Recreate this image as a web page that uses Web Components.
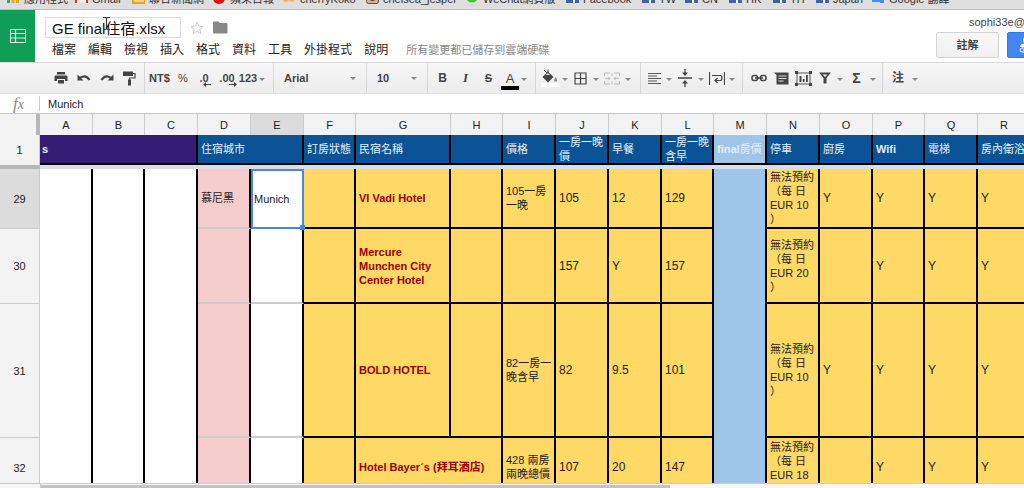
<!DOCTYPE html>
<html lang="zh-Hant">
<head>
<meta charset="utf-8">
<title>GE final住宿.xlsx</title>
<style>
html,body{margin:0;height:100%}
body{font-family:"Liberation Sans","Noto Sans CJK TC",sans-serif;font-size:12px;color:#222;background:#fff;overflow:hidden}
</style>
</head>
<body>
<sheet-app></sheet-app>

<template id="t-app">
<style>
:host{display:flex;flex-direction:column;height:100vh}
sheet-grid{flex:1;min-height:0}
</style>
<bookmark-bar>
<bookmark-item kind="apps" style="width:55px">應用程式</bookmark-item>
<bookmark-item kind="mail" style="width:44px">Gmail</bookmark-item>
<bookmark-item kind="news" style="width:68px">聯合新聞網</bookmark-item>
<bookmark-item kind="apple" style="width:57px">蘋果日報</bookmark-item>
<bookmark-item kind="cherry" style="width:70px">cherryKoko</bookmark-item>
<bookmark-item kind="cam" style="width:87px">chelsea_jesper</bookmark-item>
<bookmark-item kind="chat" style="width:87px">WeChat網頁版</bookmark-item>
<bookmark-item kind="fb" style="width:63px">Facebook</bookmark-item>
<bookmark-item kind="fb" style="width:30px">TW</bookmark-item>
<bookmark-item kind="fb" style="width:31px">CN</bookmark-item>
<bookmark-item kind="fb" style="width:31px">HK</bookmark-item>
<bookmark-item kind="fb" style="width:30px">TH</bookmark-item>
<bookmark-item kind="fb" style="width:43px">Japan</bookmark-item>
<bookmark-item kind="tr" style="width:90px">Google 翻譯</bookmark-item>
</bookmark-bar>
<doc-header></doc-header>
<tool-bar></tool-bar>
<formula-bar></formula-bar>
<sheet-grid></sheet-grid>
<scroll-strip></scroll-strip>
</template>

<template id="t-bookmarks">
<style>
:host{display:flex;flex:none;align-items:flex-end;gap:13px;height:9px;padding-left:7px;overflow:hidden;background:#dedede;border-bottom:1px solid #bdbdbd}
</style>
<slot></slot>
</template>

<template id="t-header">
<style>
:host{display:flex;flex:none;height:52px;overflow:hidden;background:#fff}
.logo{flex:none;width:35px;background:#0f9d58;display:flex;align-items:center;justify-content:center}
.main{flex:1;min-width:0;padding:7px 0 0 10px;display:flex;flex-direction:column;gap:3px}
.title{display:flex;align-items:center;height:21px}
.name{position:relative}
input{box-sizing:border-box;display:block;width:136px;height:21px;border:1px solid #dcdcdc;padding:0 6px;font:15px/19px "Liberation Sans","Noto Sans CJK TC",sans-serif;color:#111;background:#fff;outline:0}
.beam{position:absolute;left:57px;top:-1px}
.icon{border:0;background:none;padding:0;display:flex;margin-left:9px}
nav{display:flex;align-items:center;height:18px;white-space:nowrap}
nav button{border:0;background:none;padding:0 6px;font:12px/18px "Liberation Sans","Noto Sans CJK TC",sans-serif;color:#222}
nav button:first-child{padding-left:7px}
.saved{margin-left:12px;font-size:11px;line-height:18px;color:#888}
.side{flex:none;width:88px;display:flex;flex-direction:column;overflow:hidden;padding-top:4px}
.mail{font-size:11px;line-height:16px;margin-left:33px;white-space:nowrap;color:#444}
.acts{display:flex;gap:8px;margin-top:2px}
.acts button{box-sizing:border-box;flex:none;height:26px;border:1px solid #d4d4d4;border-radius:2px;padding:0}
.note{width:63px;background:linear-gradient(#f8f8f8,#f0f0f0);font:bold 11px/22px "Liberation Sans","Noto Sans CJK TC",sans-serif;color:#444}
.acts .share{width:80px;background:#4285f4;border-color:#3079ed;text-align:left;padding-left:11px}
.share svg{display:block}
</style>
<div class="logo"><svg width="18" height="16" viewBox="0 0 18 16" fill="none" stroke="#d5f0e1" stroke-width="1"><rect x="1.5" y="1.5" width="15" height="13"/><path d="M1.5 5.500H16.500M1.500 10H16.500M6.500 1.500V14.500" stroke-width="1.200"/></svg></div>
<div class="main">
<div class="title">
<div class="name"><input aria-label="文件名稱" value="GE final住宿.xlsx"><svg class="beam" width="9" height="15" viewBox="0 0 9 15" fill="none" stroke="#333" stroke-width="1.100"><path d="M1 1.500H3.500L4.500 2.500L5.500 1.500H8M4.500 2.500V12.500M1 13.500H3.500L4.500 12.500L5.500 13.500H8"/></svg></div>
<button class="icon" aria-label="加星號"><svg width="14" height="14" viewBox="0 0 14 14"><path d="M7 1L8.800 5.200 13 5.500 9.800 8.300 10.800 12.700 7 10.300 3.200 12.700 4.200 8.300 1 5.500 5.200 5.200Z" fill="#fff" stroke="#ccc"/></svg></button>
<button class="icon" aria-label="資料夾"><svg width="15" height="13" viewBox="0 0 15 13"><path d="M0 1.500Q0 .5 1 .5H5.500L7 2H13.500Q14.500 2 14.500 3V11.500Q14.500 12.500 13.500 12.500H1Q0 12.500 0 11.500Z" fill="#888"/></svg></button>
</div>
<nav><button>檔案</button><button>編輯</button><button>檢視</button><button>插入</button><button>格式</button><button>資料</button><button>工具</button><button>外掛程式</button><button>說明</button><span class="saved">所有變更都已儲存到雲端硬碟</span></nav>
</div>
<div class="side"><div class="mail">sophi33e@g</div>
<div class="acts"><button class="note">註解</button><button class="share" aria-label="共用"><svg width="18" height="18" viewBox="0 0 18 18" fill="#fff"><circle cx="7" cy="4" r="3"/><path d="M1 10Q2 7.500 7 7.500T13 10V11H1Z"/><rect x="1" y="12" width="6" height="4" rx="2" fill="none" stroke="#fff"/><path d="M4 14H10" stroke="#fff"/></svg></button></div></div>
</template>

<template id="t-toolbar">
<style>
:host{display:flex;flex:none;height:30px;padding-left:49px;overflow:hidden;border-top:1px solid #d9d9d9;border-bottom:1px solid #e2e2e2;background:linear-gradient(#f7f7f7,#ececec);color:#444}
svg{display:block}
b{font-size:11px}
.dec{position:relative}
.dec svg{position:absolute;right:-2px;top:11px}
.a{display:flex;flex-direction:column;align-items:center;font-size:13px;line-height:14px;padding-top:5px}
.a::after{content:"";width:18px;height:4px;background:#000}
</style>
<tool-group style="padding-right:3px">
<tool-button w="23" label="列印"><svg width="14" height="12" viewBox="0 0 14 12" fill="#444"><path d="M3 0H11V2.500H3ZM1.500 3.500H12.500Q13.500 3.500 13.500 5V9H11V7H3V9H.5V5Q.5 3.500 1.500 3.500ZM4 8H10V11.500H4Z"/></svg></tool-button>
<tool-button w="23" label="復原"><svg width="14" height="10" viewBox="0 0 14 10"><path d="M.5 1.500V7.500H6.500L4.300 5.500Q8.500 3 11.500 7.500L13.500 6.500Q9 -.5 2.800 3.800Z" fill="#444"/></svg></tool-button>
<tool-button w="23" label="重做"><svg width="14" height="10" viewBox="0 0 14 10"><path d="M13.500 1.500V7.500H7.500L9.700 5.500Q5.500 3 2.500 7.500L.5 6.500Q5 -.5 11.200 3.800Z" fill="#444"/></svg></tool-button>
<tool-button w="23" label="複製格式"><svg width="13" height="15" viewBox="0 0 13 15"><path d="M0 .5H10V5H0Z" fill="#444"/><path d="M10 2.500H12V7H6.500V9" fill="none" stroke="#444" stroke-width="1.200"/><rect x="5" y="8.500" width="3" height="6" fill="#444"/></svg></tool-button>
</tool-group>
<tool-group style="padding-right:7px">
<tool-button w="29"><b>NT$</b></tool-button>
<tool-button w="18"><b style="font-weight:normal">%</b></tool-button>
<tool-button w="24" label="減少小數位數"><div class="dec"><b>.0</b><svg width="8" height="5" viewBox="0 0 8 5"><path d="M0 2.500L3 0V2H8V3H3V5Z" fill="#444"/></svg></div></tool-button>
<tool-button w="22" label="增加小數位數"><div class="dec"><b>.00</b><svg width="8" height="5" viewBox="0 0 8 5"><path d="M8 2.500L5 0V2H0V3H5V5Z" fill="#444"/></svg></div></tool-button>
<tool-button w="20"><b>123</b></tool-button><tool-caret></tool-caret>
</tool-group>
<tool-group><tool-select w="92" value="Arial" label="字型"></tool-select></tool-group>
<tool-group><tool-select w="60" value="10" label="字型大小"></tool-select></tool-group>
<tool-group style="padding:0 7px 0 3px">
<tool-button w="23"><b style="font-size:12px">B</b></tool-button>
<tool-button w="23"><b style="font:italic bold 13px 'Liberation Serif',serif">I</b></tool-button>
<tool-button w="23"><b style="text-decoration:line-through">S</b></tool-button>
<tool-button w="20"><span class="a">A</span></tool-button><tool-caret></tool-caret>
</tool-group>
<tool-group style="padding:0 8px 0 3px">
<tool-button w="22" label="填滿色彩"><svg width="18" height="18" viewBox="0 0 18 18"><path d="M0 14H18V18H0Z" fill="#fff"/><path d="M7 2.500L12.500 8 7 13.500 1.500 8Z" fill="#444"/><path d="M3 1L8 6M7 .5V6" stroke="#444" fill="none"/><path d="M5 5.500L7 4L9 6H4.500Z" fill="#ddd"/><path d="M14.500 8Q17 11 15.800 12.500H13.500Q12.500 11 14.500 8Z" fill="#888"/></svg></tool-button><tool-caret></tool-caret>
<tool-button w="23" label="框線"><svg width="13" height="13" viewBox="0 0 13 13"><path d="M1 1H12V12H1ZM1 6.500H12M6.500 1V12" fill="none" stroke="#444" stroke-width="1.200"/></svg></tool-button><tool-caret></tool-caret>
<tool-button w="24" label="合併儲存格"><svg width="16" height="13" viewBox="0 0 16 13" fill="none" stroke="#bbb"><path d="M6 1H.5V4M.5 9V12H6M10 1H15.500V4M15.500 9V12H10M8 1V4M8 9V12M1 6.500H6M4 4.500L6 6.500 4 8.500M15 6.500H10M12 4.500L10 6.500 12 8.500"/></svg></tool-button><tool-caret></tool-caret>
</tool-group>
<tool-group style="padding:0 6px 0 2px">
<tool-button w="22" label="水平對齊"><svg width="13" height="11" viewBox="0 0 13 11"><path d="M0 .5H13M0 3H9M0 5.500H13M0 8H9M0 10.500H13" stroke="#555"/></svg></tool-button><tool-caret></tool-caret>
<tool-button w="24" label="垂直對齊"><svg width="14" height="18" viewBox="0 0 14 18"><path d="M0 9H14M7 0V4M7 18V14" stroke="#444" stroke-width="1.300"/><path d="M4 3.500H10L7 7ZM4 14.500H10L7 11Z" fill="#444"/></svg></tool-button><tool-caret></tool-caret>
<tool-button w="23" label="自動換行"><svg width="16" height="13" viewBox="0 0 16 13" fill="none" stroke="#444"><path d="M.5 0V13M15.500 0V13M3 3.500H11Q13 3.500 13 6T11 8.500H6M8.500 6L6 8.500 8.500 11" stroke-width="1.200"/></svg></tool-button><tool-caret></tool-caret>
</tool-group>
<tool-group style="padding:0 5px 0 4px">
<tool-button w="23" label="插入連結"><svg width="16" height="8" viewBox="0 0 16 8" fill="none" stroke="#444" stroke-width="1.500"><rect x="1" y="1.500" width="5.500" height="5" rx="2"/><rect x="9.500" y="1.500" width="5.500" height="5" rx="2"/><path d="M4 4H12"/></svg></tool-button>
<tool-button w="22" label="插入註解"><svg width="15" height="13" viewBox="0 0 15 13"><path d="M0 .5H14.500V12.500H2.500V3Z" fill="#444"/><path d="M4.500 4H12.500M4.500 6.500H12.500M4.500 9H9.500" stroke="#ddd"/></svg></tool-button>
<tool-button w="22" label="插入圖表"><svg width="17" height="15" viewBox="0 0 17 15"><rect x="2" y="2" width="13" height="11" fill="none" stroke="#555"/><path d="M0 0H3V3H0ZM14 0H17V3H14ZM0 12H3V15H0ZM14 12H17V15H14ZM4.500 5H6.500V11H4.500ZM7.800 8H9.500V11H7.800ZM11 4H12.800V11H11Z" fill="#444"/></svg></tool-button>
<tool-button w="22" label="篩選器"><svg width="12" height="12" viewBox="0 0 12 12"><path d="M0 .5H12L7.500 6V11.500H4.500V6Z" fill="#444"/><path d="M3.500 2.500H8.500L6 5Z" fill="#eee"/></svg></tool-button><tool-caret></tool-caret>
<tool-button w="25"><b style="font-size:14px">Σ</b></tool-button><tool-caret></tool-caret>
</tool-group>
<tool-group style="padding:0 4px;border:0">
<tool-button w="22"><b style="font-size:12px">注</b></tool-button><tool-caret style="width:12px"></tool-caret>
</tool-group>
</template>

<template id="t-formula">
<style>
:host{display:flex;flex:none;align-items:center;height:19px;border-bottom:1px solid #c8c8c8;background:#fff}
label{box-sizing:border-box;flex:none;width:40px;height:15px;padding-left:13px;border-right:1px solid #ccc;font:italic 17px/15px "Liberation Serif",serif;color:#888}
small{font-size:14px}
input{flex:1;min-width:0;border:0;outline:0;padding:0 8px;font:11px/16px "Liberation Sans",sans-serif;color:#222;background:none}
</style>
<label for="fx">f<small>x</small></label><input id="fx" value="Munich">
</template>

<template id="t-scroll">
<style>
:host{display:flex;flex:none;height:4px;border-top:1px solid #ccc;background:#f6f6f6}
.gut{width:40px;border-right:1px solid #ccc;flex:none}
.track{flex:1;padding-top:1px}
.thumb{width:64%;height:3px;background:#c3c3c3}
</style>
<div class="gut"></div><div class="track"><div class="thumb"></div></div>
</template>

<template id="t-grid">
<style>
:host{display:block;overflow:hidden}
table{table-layout:fixed;width:100%;border-collapse:separate;border-spacing:0}
th,td{box-sizing:border-box;padding:0 0 0 3px;text-align:left;vertical-align:middle;font-size:11px;line-height:14px;overflow:hidden}
.letters th{height:21px;padding:0;text-align:center;font-weight:normal;background:#f3f3f3;border-right:1px solid #ccc}
.letters .corner{border-right:4px solid #b7b7b7}
tr>.no{padding:0;text-align:center;font-weight:normal;background:#f3f3f3;border-right:1px solid #ccc;border-bottom:1px solid #ccc}
.letters .on,tr>.on{background:#dcdcdc}
.head th{height:30px;background:#0b5394;color:#e4eef8;font-weight:normal;white-space:nowrap;border-right:2px solid #000;border-bottom:2px solid #000}
.head .no{background:#f3f3f3;color:#222;border-right:1px solid #ccc;border-bottom:0}
.head .purple{background:#351c75;padding-left:2px}
.head .sky{background:#9fc5e8}
.freeze td{height:4px;line-height:0;padding:0;background:#dadde3}
.freeze td:first-child{background:#b7b7b7}
td{background:#ffd966;border-right:2px solid #000;border-bottom:2px solid #000}
.freeze td{border:0}
.w{background:#fff;border-bottom:0}
.p{background:#f4cccc;border-bottom:2px solid #ccc}
.e{background:#fff;border-bottom:2px solid #ccc}
.b{background:#9fc5e8;border-bottom:0}
.g{font-weight:bold;color:#990000}
.v{font-size:12px}
.top{vertical-align:top;padding-top:2px}
.sel{position:relative;overflow:visible;background:#fff;border:2px solid #4a86e8;border-left:0;box-shadow:inset 2px 0 #4a86e8}
.sel::after{content:"";position:absolute;right:-3px;bottom:-3px;width:5px;height:5px;background:#4a86e8}
</style>
<table>
<colgroup></colgroup>
<thead>
<tr class="letters"></tr>
<tr class="head"><th class="no">1</th><th colspan="3" class="purple"><b>s</b></th><th colspan="2">住宿城市</th><th>訂房狀態</th><th>民宿名稱</th><th></th><th>價格</th><th>一房一晚<br>價</th><th>早餐</th><th>一房一晚<br>含早</th><th class="sky"><b>final</b>房價</th><th>停車</th><th>廚房</th><th><b>Wifi</b></th><th>電梯</th><th>房內衛浴</th></tr>
<tr class="freeze"><td></td><td colspan="18"></td></tr>
</thead>
<tbody>
<tr style="height:60px"><th class="no on">29</th><td class="w"></td><td class="w"></td><td class="w"></td><td class="p">慕尼黑</td><td class="sel">Munich</td><td></td><td class="g">VI Vadi Hotel</td><td></td><td>105一房<br>一晚</td><td class="v">105</td><td class="v">12</td><td class="v">129</td><td class="b"></td><td>無法預約<br>（每 日<br>EUR 10<br>）</td><td class="v">Y</td><td class="v">Y</td><td class="v">Y</td><td class="v">Y</td></tr>
<tr style="height:75px"><th class="no">30</th><td class="w"></td><td class="w"></td><td class="w"></td><td class="p"></td><td class="e"></td><td></td><td class="g">Mercure<br>Munchen City<br>Center Hotel</td><td></td><td></td><td class="v">157</td><td class="v">Y</td><td class="v">157</td><td class="b"></td><td>無法預約<br>（每 日<br>EUR 20<br>）</td><td></td><td class="v">Y</td><td class="v">Y</td><td class="v">Y</td></tr>
<tr style="height:134px"><th class="no">31</th><td class="w"></td><td class="w"></td><td class="w"></td><td class="p"></td><td class="e"></td><td></td><td class="g">BOLD HOTEL</td><td></td><td>82一房一<br>晚含早</td><td class="v">82</td><td class="v">9.5</td><td class="v">101</td><td class="b"></td><td>無法預約<br>（每 日<br>EUR 10<br>）</td><td class="v">Y</td><td class="v">Y</td><td class="v">Y</td><td class="v">Y</td></tr>
<tr style="height:60px"><th class="no">32</th><td class="w"></td><td class="w"></td><td class="w"></td><td class="p"></td><td class="e"></td><td></td><td class="g" colspan="2">Hotel Bayer´s (拜耳酒店)</td><td>428 兩房<br>兩晚總價</td><td class="v">107</td><td class="v">20</td><td class="v">147</td><td class="b"></td><td class="top">無法預約<br>（每 日<br>EUR 18</td><td></td><td class="v">Y</td><td class="v">Y</td><td class="v">Y</td></tr>
</tbody>
</table>
</template>

<script>
const define = (tag, id, setup) => customElements.define(tag, class extends HTMLElement {
  constructor() {
    super();
    const root = this.attachShadow({ mode: 'open' });
    root.append(document.getElementById(id).content.cloneNode(true));
    if (setup) setup(root);
  }
});

customElements.define('tool-group', class extends HTMLElement {
  constructor() {
    super();
    this.attachShadow({ mode: 'open' }).innerHTML =
      '<style>:host{display:flex;flex:none;border-right:1px solid #d6d6d6}</style><slot></slot>';
  }
});

customElements.define('tool-caret', class extends HTMLElement {
  constructor() {
    super();
    this.attachShadow({ mode: 'open' }).innerHTML =
      '<style>:host{display:flex;width:8px;align-items:center;justify-content:center}' +
      'i{border:3px solid transparent;border-top-color:#888;border-bottom:0;margin-top:2px}</style><i></i>';
  }
});

customElements.define('tool-button', class extends HTMLElement {
  connectedCallback() {
    if (this.shadowRoot) return;
    const label = this.getAttribute('label');
    this.attachShadow({ mode: 'open' }).innerHTML =
      `<style>:host{display:flex}button{display:flex;align-items:center;justify-content:center;width:${this.getAttribute('w')}px;border:0;padding:0;background:none;color:inherit;font:inherit;line-height:14px}</style>` +
      `<button ${label ? `aria-label="${label}"` : ''}><slot></slot></button>`;
  }
});

customElements.define('tool-select', class extends HTMLElement {
  connectedCallback() {
    if (this.shadowRoot) return;
    this.attachShadow({ mode: 'open' }).innerHTML =
      `<style>:host{position:relative;display:flex;width:${this.getAttribute('w')}px}
      select{appearance:none;flex:1;border:0;padding:0 0 0 10px;background:none;color:#444;font:bold 11px/14px "Liberation Sans",sans-serif}
      :host::after{content:"";position:absolute;right:10px;top:14px;border:3px solid transparent;border-top-color:#888;border-bottom:0}</style>
      <select aria-label="${this.getAttribute('label')}"><option>${this.getAttribute('value')}</option></select>`;
  }
});

const marks = {
  apps: '<path d="M0 7H3V13H0ZM4.500 7H7.500V13H4.500ZM9 7H12V13H9Z" fill="#e9a21b"/><path d="M0 7H3V13H0Z" fill="#3aa757"/>',
  mail: '<path d="M0 2H2V13H0ZM11 2H13V13H11Z" fill="#d93025"/><path d="M2 3H11V12.500H2Z" fill="#eee"/>',
  news: '<path d="M0 1H14V14H0Z" fill="#f0a020"/><path d="M2 11H12" stroke="#fff"/>',
  apple: '<circle cx="6" cy="8" r="6" fill="#e01010"/>',
  cherry: '<circle cx="3" cy="9" r="3" fill="#f3b26b"/><circle cx="9" cy="9" r="3" fill="#f3b26b"/>',
  cam: '<rect x=".5" y="1.500" width="12" height="12" rx="2" fill="#cbb49a" stroke="#6b4b33"/><circle cx="6.500" cy="8" r="3" fill="#444"/>',
  chat: '<ellipse cx="6" cy="7" rx="6" ry="5.500" fill="#44c235"/>',
  fb: '<path d="M0 0H13V13H0Z" fill="#4162a8"/><path d="M7 4H9V13H7Z" fill="#fff"/>',
  tr: '<path d="M0 0H9V12H0Z" fill="#4a8af4"/><path d="M7 5H12V13H8Z" fill="#4a8af4"/>'
};
customElements.define('bookmark-item', class extends HTMLElement {
  connectedCallback() {
    if (this.shadowRoot) return;
    this.attachShadow({ mode: 'open' }).innerHTML =
      `<style>:host{display:flex;flex:none}a{display:flex;gap:4px;align-items:flex-end;color:#333;text-decoration:none;font-size:11px;line-height:14px;white-space:nowrap;padding-bottom:3px}svg{flex:none;margin-bottom:2px}</style>
      <a href="#"><svg width="13" height="14" viewBox="0 0 13 14">${marks[this.getAttribute('kind')]}</svg><slot></slot></a>`;
  }
});

define('bookmark-bar', 't-bookmarks');
define('doc-header', 't-header');
define('tool-bar', 't-toolbar');
define('formula-bar', 't-formula');
define('scroll-strip', 't-scroll');
define('sheet-grid', 't-grid', root => {
  const widths = [40, 53, 52, 53, 53, 53, 52, 95, 52, 53, 53, 53, 52, 53, 53, 53, 52, 53, 53];
  root.querySelector('colgroup').innerHTML = widths.map(w => `<col style="width:${w}px">`).join('');
  root.querySelector('.letters').innerHTML = '<th class="corner"></th>' +
    [...'ABCDEFGHIJKLMNOPQR'].map(c => `<th${c === 'E' ? ' class="on"' : ''}>${c}</th>`).join('');
});
define('sheet-app', 't-app');
</script>
</body>
</html>
